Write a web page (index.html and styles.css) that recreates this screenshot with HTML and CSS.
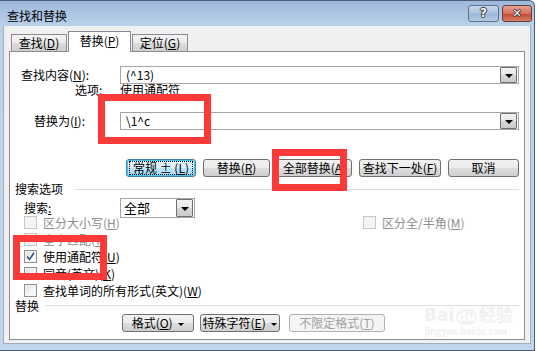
FILE: index.html
```html
<!DOCTYPE html>
<html lang="zh-CN">
<head>
    <meta charset="UTF-8">
    <title>查找和替换</title>
    <link rel="stylesheet" href="styles.css">
</head>
<body>
    <div class="window">
        <div class="titlebar">
            <span class="title">查找和替换</span>
            <div class="caption-btns">
                <div class="cap help">?</div>
                <div class="cap close">✕</div>
            </div>
        </div>

        <div class="client">
            <div class="tabs">
                <div class="tab">查找(<u>D</u>)</div>
                <div class="tab active">替换(<u>P</u>)</div>
                <div class="tab">定位(<u>G</u>)</div>
            </div>

            <div class="panel">
                <div class="row r-find">
                    <span class="label find-label">查找内容(<u>N</u>):</span>
                    <div class="combo wide">
                        <span class="combo-text">(^13)</span>
                        <span class="drop"></span>
                    </div>
                </div>
                <div class="row r-opts">
                    <span class="label opts-label">选项:</span>
                    <span>使用通配符</span>
                </div>
                <div class="row r-repl">
                    <span class="label repl-label">替换为(<u>I</u>):</span>
                    <div class="combo wide">
                        <span class="combo-text">\1^c</span>
                        <span class="drop"></span>
                    </div>
                </div>

                <div class="btn-row">
                    <button class="btn focused"><span class="focus-rect">常规 ± (<u>L</u>)</span></button>
                    <button class="btn w-repl">替换(<u>R</u>)</button>
                    <button class="btn w-all">全部替换(<u>A</u>)</button>
                    <button class="btn w-next">查找下一处(<u>F</u>)</button>
                    <button class="btn w-cancel">取消</button>
                </div>

                <div class="group">
                    <span>搜索选项</span>
                    <span class="rule"></span>
                </div>

                <div class="row r-search">
                    <span class="label search-label">搜索<u>:</u></span>
                    <div class="combo narrow">
                        <span class="combo-text">全部</span>
                        <span class="drop"></span>
                    </div>
                </div>

                <div class="checks">
                    <div class="check-row">
                        <label class="check disabled col"><span class="box"></span><span>区分大小写(<u>H</u>)</span></label>
                        <label class="check disabled"><span class="box"></span><span>区分全/半角(<u>M</u>)</span></label>
                    </div>
                    <div class="check-row">
                        <label class="check disabled"><span class="box"></span><span>全字匹配(<u>Y</u>)</span></label>
                    </div>
                    <div class="check-row">
                        <label class="check"><span class="box checked">
                            <svg width="9" height="9" viewBox="0 0 9 9"><path d="M1 4.5 L3.5 7.5 L8 0.8" fill="none" stroke="#3b4f8c" stroke-width="1.6"/></svg>
                        </span><span>使用通配符(<u>U</u>)</span></label>
                    </div>
                    <div class="check-row">
                        <label class="check"><span class="box"></span><span>同音(英文)(<u>K</u>)</span></label>
                    </div>
                    <div class="check-row">
                        <label class="check"><span class="box"></span><span>查找单词的所有形式(英文)(<u>W</u>)</span></label>
                    </div>
                </div>

                <div class="group g-repl">
                    <span>替换</span>
                    <span class="rule"></span>
                </div>

                <div class="btn-row bottom">
                    <button class="btn w-fmt">格式(<u>O</u>) <span class="caret"></span></button>
                    <button class="btn w-spec">特殊字符(<u>E</u>) <span class="caret"></span></button>
                    <button class="btn w-nofmt" disabled>不限定格式(<u>T</u>)</button>
                </div>
            </div>
        </div>

        <div class="watermark">
            <div class="wm-logo">Bai<span class="wm-du">du</span>经验</div>
            <div class="wm-url">jingyan.baidu.com</div>
        </div>

        <div class="mark mark-repl"></div>
        <div class="mark mark-all"></div>
        <div class="mark mark-wild"></div>
    </div>
</body>
</html>
```

FILE: styles.css
```css
* {
    box-sizing: border-box;
}

body {
    margin: 0;
    background: #fff;
    font-family: "Noto Sans CJK SC", sans-serif;
    font-size: 12px;
    color: #000;
}

u {
    text-decoration: underline;
}

.window {
    position: relative;
    width: 535px;
    height: 351px;
    border: 1px solid #4f5f73;
    border-left: none;
    border-radius: 0 6px 0 0;
    background: linear-gradient(#9db8db, #bcd2ea 26px, #c0d6ec);
    display: flex;
    flex-direction: column;
    overflow: hidden;
}

/* title bar */
.titlebar {
    height: 25px;
    display: flex;
    align-items: flex-start;
    padding-left: 7px;
}
.title {
    line-height: 12px;
    margin-top: 9px;
}
.caption-btns {
    margin-left: auto;
    margin-right: 2px;
    margin-top: 4px;
    display: flex;
    gap: 3px;
}
.cap {
    height: 17px;
    border: 1px solid #5d7089;
    border-radius: 3px;
    color: #fff;
    font-family: "DejaVu Sans", sans-serif;
    font-weight: bold;
    font-size: 12px;
    line-height: 15px;
    text-align: center;
    text-shadow: -1px 0 #333, 1px 0 #333, 0 -1px #333, 0 1px #333;
}
.help {
    width: 31px;
    background: linear-gradient(#c6d7ec, #a8c0de 50%, #97b3d7 51%, #b4cbe6);
}
.close {
    width: 30px;
    border-color: #6b3a34;
    background: linear-gradient(#e6a292, #d4705c 50%, #c4452e 51%, #d5806a);
    font-size: 11px;
}

/* client area */
.client {
    flex: 1;
    margin: 0 3px 6px 3px;
    background: #f0f0f0;
    border: 1px solid #9fadbf;
    border-top: none;
    display: flex;
    flex-direction: column;
    padding-top: 5px;
}

.tabs {
    display: flex;
    margin-left: 7px;
    height: 20px;
    align-items: flex-end;
    position: relative;
    z-index: 1;
}
.tab {
    height: 17px;
    border: 1px solid #898c95;
    border-bottom: none;
    background: linear-gradient(#f3f3f3, #ebebeb 50%, #dcdcdc 51%, #cfcfcf);
    width: 56px;
    text-align: center;
    line-height: 16px;
    margin-right: 1px;
}
.tab.active {
    height: 21px;
    width: 63px;
    background: #fff;
    margin-bottom: -1px;
    line-height: 18px;
}

.panel {
    flex: 1;
    margin: 0 5px 3px 5px;
    background: #fff;
    border: 1px solid #898c95;
    display: flex;
    flex-direction: column;
}

.row {
    display: flex;
    align-items: center;
}
.label {
    width: 110px;
    flex-shrink: 0;
    line-height: 12px;
}
.r-find {
    margin-top: 14px;
    height: 18px;
}
.find-label {
    padding-left: 11px;
}
.r-opts {
    height: 12px;
    line-height: 12px;
}
.opts-label {
    padding-left: 65px;
}
.r-repl {
    margin-top: 16px;
    height: 18px;
}
.repl-label {
    padding-left: 24px;
}

.combo {
    height: 18px;
    border: 1px solid #a5a5a5;
    background: #fff;
    display: flex;
    align-items: center;
    justify-content: space-between;
    padding-left: 5px;
    padding-right: 1px;
}
.combo.wide {
    width: 399px;
}
.combo.narrow {
    width: 75px;
    height: 20px;
    padding-left: 3px;
    font-size: 13px;
}
.combo-text {
    line-height: 14px;
}
.drop {
    width: 17px;
    height: 16px;
    border: 1px solid #707070;
    border-radius: 1px;
    background: linear-gradient(#f2f2f2, #e6e6e6 50%, #d6d6d6 51%, #cbcbcb);
    position: relative;
}
.narrow .drop {
    height: 18px;
}
.drop::after {
    content: "";
    position: absolute;
    left: 4px;
    top: 6px;
    border-left: 4px solid transparent;
    border-right: 4px solid transparent;
    border-top: 4px solid #000;
}
.narrow .drop::after {
    top: 7px;
}

/* buttons */
.btn-row {
    display: flex;
    justify-content: flex-end;
    gap: 7px;
    margin-top: 29px;
    margin-right: 5px;
    height: 18px;
}
.btn {
    height: 18px;
    padding: 0;
    border: 1px solid #707070;
    border-radius: 3px;
    background: linear-gradient(#f2f2f2, #ebebeb 50%, #dddddd 51%, #cfcfcf);
    font-family: inherit;
    font-size: 12px;
    line-height: 14px;
    color: #000;
    white-space: nowrap;
}
.btn.focused {
    width: 70px;
    border-color: #3c7fb1;
    box-shadow: inset 0 0 0 1px #48c5f1;
    background: linear-gradient(#eaf6fd, #d9f0fc 50%, #bee6fd 51%, #a7d9f5);
}
.focus-rect {
    display: inline-block;
    border: 1px dotted #000;
    padding: 0 3px;
    line-height: 12px;
}
.w-repl { width: 67px; }
.w-all { width: 75px; }
.w-next { width: 82px; }
.w-cancel { width: 71px; }

.btn-row.bottom {
    justify-content: flex-start;
    margin-top: 2px;
    padding-left: 112px;
    gap: 6px;
}
.w-fmt { width: 72px; }
.w-spec { width: 80px; margin-right: 3px; }
.w-nofmt {
    width: 96px;
    color: #a0a0a0;
    border-color: #adb2b5;
    background: #f4f4f4;
}
.caret {
    display: inline-block;
    vertical-align: middle;
    margin-left: 3px;
    border-left: 3px solid transparent;
    border-right: 3px solid transparent;
    border-top: 3px solid #000;
}

/* group headings */
.group {
    display: flex;
    align-items: center;
    gap: 12px;
    margin-top: 6px;
    height: 12px;
    line-height: 12px;
    padding-left: 5px;
    padding-right: 5px;
}
.rule {
    flex: 1;
    height: 1px;
    background: #d5dfe5;
}
.g-repl {
    margin-top: 0;
    height: 13px;
    gap: 6px;
}

.r-search {
    margin-top: 3px;
    height: 20px;
}
.search-label {
    padding-left: 14px;
}

/* checkboxes */
.checks {
    margin-top: -4px;
}
.check-row {
    height: 17px;
    display: flex;
    align-items: center;
    padding-left: 14px;
}
.check {
    display: flex;
    align-items: center;
    gap: 6px;
    line-height: 12px;
    white-space: nowrap;
}
.check.col {
    width: 339px;
}
.box {
    width: 13px;
    height: 13px;
    flex-shrink: 0;
    border: 1px solid #8e8f8f;
    background: linear-gradient(135deg, #dcdcdc, #f6f6f6 60%, #fff);
    box-shadow: inset 0 0 0 1px #f4f4f4;
    display: flex;
    align-items: center;
    justify-content: center;
}
.disabled {
    color: #8d8d8d;
}
.disabled .box {
    border-color: #c6c6c6;
    background: #f4f4f4;
}

/* faint watermark of the source image */
.watermark {
    position: absolute;
    left: 424px;
    top: 303px;
    width: 84px;
    color: #f0f0f0;
    text-align: center;
    white-space: nowrap;
}
.wm-logo {
    font-family: "DejaVu Sans", sans-serif;
    font-weight: bold;
    font-size: 17px;
    line-height: 22px;
}
.wm-du {
    display: inline-block;
    border-radius: 8px;
    background: #f3f3f3;
    color: #fff;
    padding: 0 1px;
    margin: 0 2px;
    font-size: 13px;
    line-height: 16px;
}
.wm-url {
    font-size: 9px;
    line-height: 11px;
    font-weight: bold;
}

/* red annotation frames */
.mark {
    position: absolute;
    border: 7px solid #fd3a3a;
}
.mark-repl {
    left: 98px;
    top: 93px;
    width: 113px;
    height: 50px;
}
.mark-all {
    left: 272px;
    top: 148px;
    width: 75px;
    height: 42px;
}
.mark-wild {
    left: 13px;
    top: 234px;
    width: 94px;
    height: 45px;
}
```
